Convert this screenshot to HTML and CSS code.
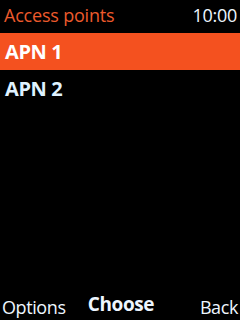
FILE: index.html
```html
<!DOCTYPE html>
<html>
<head>
<meta charset="utf-8">
<link rel="stylesheet" href="styles.css">
</head>
<body>
<div class="screen">
  <div class="header">
    <span class="title">Access points</span>
    <span class="time">10:00</span>
  </div>
  <div class="list">
    <div class="item selected">APN 1</div>
    <div class="item">APN 2</div>
  </div>
  <div class="softkeys">
    <span class="sk left">Options</span>
    <span class="sk mid">Choose</span>
    <span class="sk right">Back</span>
  </div>
</div>
</body>
</html>
```
FILE: styles.css
```css
html, body {
  margin: 0;
  padding: 0;
  background: #000;
}
.screen {
  width: 240px;
  height: 320px;
  display: flex;
  flex-direction: column;
  background: #000;
  font-family: "Open Sans", sans-serif;
  overflow: hidden;
}
.header {
  height: 33px;
  display: flex;
  justify-content: space-between;
  align-items: center;
  padding: 0 3px 3px 4px;
  box-sizing: border-box;
}
.title {
  color: #ec5a2c;
  font-size: 18px;
  letter-spacing: -0.2px;
}
.time {
  color: #eef6ff;
  font-size: 18px;
  letter-spacing: -0.3px;
}
.list {
  flex: 1;
  display: flex;
  flex-direction: column;
}
.item {
  height: 37px;
  display: flex;
  align-items: center;
  padding-left: 5px;
  color: #dff2ff;
  font-size: 20px;
  font-weight: 700;
  letter-spacing: -0.4px;
}
.item.selected {
  background: #f4511f;
  color: #fff;
}
.softkeys {
  height: 26px;
  display: grid;
  grid-template-columns: 1fr auto 1fr;
  align-items: end;
  padding: 0 2px 0 2px;
  color: #eef6ff;
}
.sk {
  font-size: 18px;
  letter-spacing: -0.4px;
  line-height: 26px;
}
.sk.left {
  justify-self: start;
}
.sk.right {
  justify-self: end;
}
.sk.mid {
  font-weight: 700;
  font-size: 19px;
  position: relative;
  top: -3px;
  left: 1px;
}
```
